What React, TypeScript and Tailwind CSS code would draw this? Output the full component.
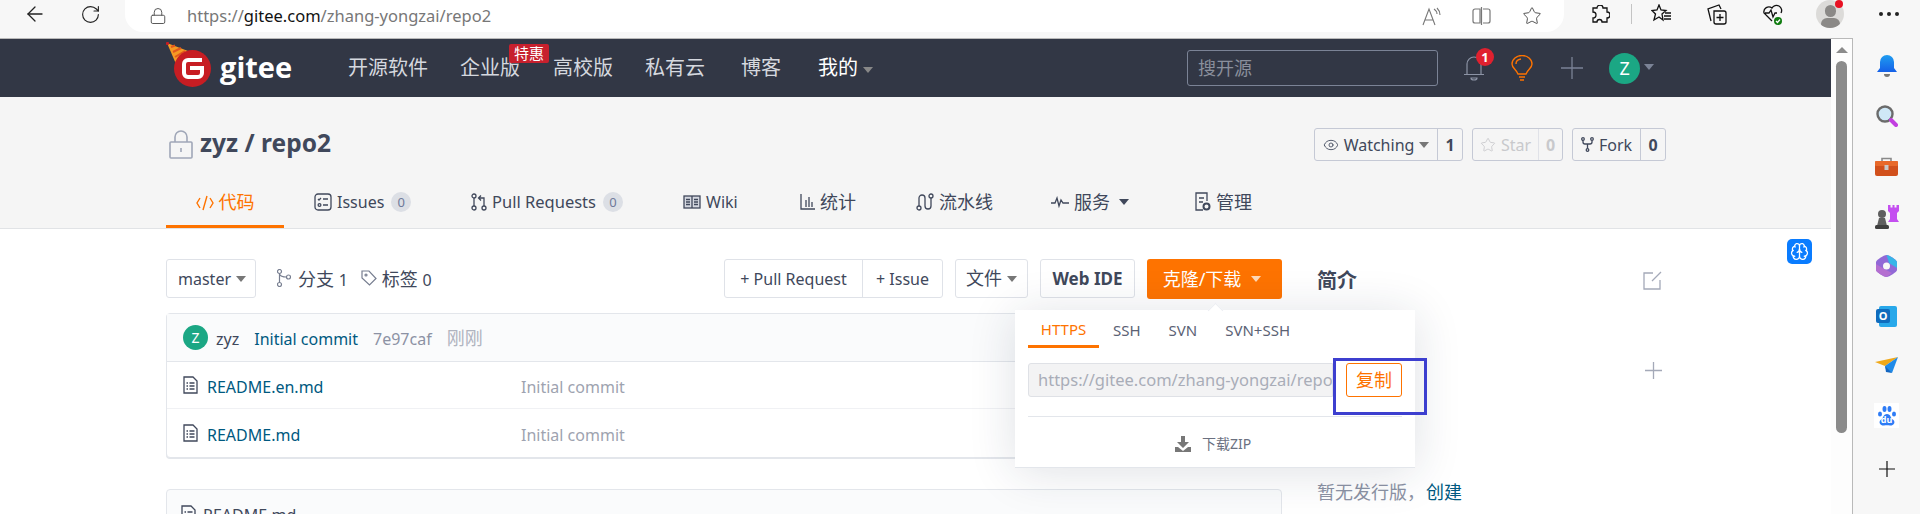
import { ArrowLeft, RotateCw, Lock, Star, Eye, Brain } from "lucide-react";

const FONT = "font-['Noto_Sans','Noto_Sans_CJK_SC',sans-serif]";

function Caret({ color = "border-t-[#888]", className = "" }: { color?: string; className?: string }) {
  return <span className={`inline-block w-0 h-0 border-x-[5px] border-t-[6px] border-x-transparent ${color} ${className}`} />;
}

function GiteeLogo() {
  return (
    <svg width="46" height="46" viewBox="0 0 46 46" className="shrink-0">
      <path d="M1 1 L22 9 L10 22 Z" fill="#f59a23" />
      <path d="M5 5 L9 3.5 M7 10 L15 6 M9 15 L19 9" stroke="#e2571e" strokeWidth="2" />
      <circle cx="1.5" cy="1.5" r="1.6" fill="#c71d23" />
      <circle cx="26.5" cy="26.5" r="18.5" fill="#c71d23" />
      <path d="M36 18 H22 a4 4 0 0 0 -4 4 v9 a4 4 0 0 0 4 4 h10 a4 4 0 0 0 4 -4 v-5 h-12" fill="none" stroke="#fff" strokeWidth="4" />
    </svg>
  );
}

function TabIcon({ name }: { name: string }) {
  const p = { fill: "none", stroke: "#40485b", strokeWidth: 1.3 };
  if (name === "code")
    return (
      <svg width="18" height="18" viewBox="0 0 18 18" fill="none" stroke="#fe7300" strokeWidth="1.4">
        <path d="M4 4 L1 9 L4 14 M14 4 L17 9 L14 14 M11 2 L7 16" />
      </svg>
    );
  if (name === "issues")
    return (
      <svg width="18" height="18" viewBox="0 0 18 18" {...p}>
        <rect x="1" y="1" width="16" height="16" rx="3" />
        <path d="M9 6 H14 M9 12 H14 M4 6 l1 1 l2 -2" />
        <circle cx="5.5" cy="12" r="1.4" />
      </svg>
    );
  if (name === "pr")
    return (
      <svg width="16" height="18" viewBox="0 0 16 18" {...p}>
        <circle cx="3" cy="3" r="2" />
        <circle cx="3" cy="15" r="2" />
        <circle cx="13" cy="15" r="2" />
        <path d="M3 5 V13 M13 13 V5 H8 M10 2.5 L7.5 5 L10 7.5" />
      </svg>
    );
  if (name === "wiki")
    return (
      <svg width="18" height="16" viewBox="0 0 18 16" {...p}>
        <rect x="1" y="2" width="16" height="12" fill="#d5d8e0" />
        <path d="M9 2 V14 M3 5.5 H7 M3 8 H7 M3 10.5 H7 M11 5.5 H15 M11 8 H15 M11 10.5 H15" />
      </svg>
    );
  if (name === "stats")
    return (
      <svg width="15" height="18" viewBox="0 0 15 18" {...p}>
        <path d="M1 1 V16 H15 M6 14 V7 M9 14 V4 M12 14 V9" />
      </svg>
    );
  if (name === "pipe")
    return (
      <svg width="18" height="18" viewBox="0 0 18 18" {...p}>
        <circle cx="3" cy="15" r="2" />
        <circle cx="15" cy="3" r="2" />
        <path d="M3 13 V5 a3 3 0 0 1 6 0 V13 a3 3 0 0 0 6 0 V5" />
      </svg>
    );
  if (name === "serv")
    return (
      <svg width="18" height="12" viewBox="0 0 18 12" {...p}>
        <path d="M0 7 H4 L6 2 L8 10 L10 4 L12 7 H18" />
      </svg>
    );
  return (
    <svg width="16" height="20" viewBox="0 0 16 20" {...p}>
      <path d="M8 18 H1 V1 H12 V9 M4 6 H9 M4 10 H8" />
      <circle cx="11.5" cy="14.5" r="3" strokeWidth="2" />
    </svg>
  );
}

function FileIcon() {
  return (
    <svg width="15" height="18" viewBox="0 0 15 18" fill="none" stroke="#40485b" strokeWidth="1.3">
      <path d="M1 1 H10 L14 5 V17 H1 Z" />
      <path d="M3.5 7 H5 M6.5 7 H11.5 M3.5 10 H5 M6.5 10 H11.5 M3.5 13 H5 M6.5 13 H11.5" />
    </svg>
  );
}

const navItems = [
  { label: "开源软件", cls: "ml-[56px]" },
  { label: "企业版", cls: "ml-[32px]" },
  { label: "高校版", cls: "ml-[33px]" },
  { label: "私有云", cls: "ml-[32px]" },
  { label: "博客", cls: "ml-[36px]" },
];

const tabs = [
  { icon: "issues", label: "Issues", badge: "0", cls: "ml-[30px] w-[157px]", text: "text-[16px]" },
  { icon: "pr", label: "Pull Requests", badge: "0", cls: "w-[212px]", text: "text-[16.5px]" },
  { icon: "wiki", label: "Wiki", cls: "w-[117px]", text: "text-[16px]" },
  { icon: "stats", label: "统计", cls: "w-[116px]", text: "text-[18px]" },
  { icon: "pipe", label: "流水线", cls: "w-[135px]", text: "text-[18px]" },
  { icon: "serv", label: "服务", caret: true, cls: "w-[144px]", text: "text-[18px]" },
  { icon: "admin", label: "管理", cls: "", text: "text-[18px]" },
];

const files = [
  { name: "README.en.md", row: "h-[47px] border-b border-[#f0f1f4]" },
  { name: "README.md", row: "h-[48px]" },
];

function Browser() {
  return (
    <div className="h-[38px] flex items-start bg-[#f7f7f7]">
      <ArrowLeft size={24} strokeWidth={1.3} className="ml-[23px] mt-[2px] text-[#222]" />
      <RotateCw size={21} strokeWidth={1.3} className="ml-[33px] mt-[4px] text-[#222]" />
      <div className="ml-[24px] w-[1439px] h-[32px] bg-white rounded-b-[18px] flex items-center pl-[24px] pr-[22px]">
        <Lock size={18} strokeWidth={1.3} className="text-[#555]" />
        <span className="ml-[20px] text-[16.5px] text-[#777]">
          https://<span className="text-[#111]">gitee.com</span>/zhang-yongzai/repo2
        </span>
        <div className="ml-auto flex items-center gap-[31px] text-[#777]">
          <svg width="19" height="19" viewBox="0 0 19 19" fill="none" stroke="currentColor" strokeWidth="1.1">
            <path d="M1 18 L7 2 L13 18 M3 13 H11 M12 2 q3 2 3 5 M15 1 q3 3 3 7" />
          </svg>
          <svg width="19" height="18" viewBox="0 0 19 18" fill="none" stroke="currentColor" strokeWidth="1.2">
            <path d="M8 2 H3 a2 2 0 0 0 -2 2 V14 a2 2 0 0 0 2 2 H8 Z M11 2 H16 a2 2 0 0 1 2 2 V14 a2 2 0 0 1 -2 2 H11 M9.5 0 V18" />
          </svg>
          <Star size={20} strokeWidth={1.2} className="text-[#555]" />
        </div>
      </div>
      <svg width="20" height="20" viewBox="0 0 20 20" fill="none" stroke="#111" strokeWidth="1.3" className="ml-[26px] mt-[5px]">
        <path d="M7 3 a3 3 0 0 1 6 0 h4 v4 a3 3 0 0 1 0 6 v4 h-5 a2.5 2.5 0 0 0 -5 0 h-4 v-4 a3 3 0 0 0 0 -6 v-4 Z" />
      </svg>
      <div className="ml-[21px] mt-[4px] w-[1px] h-[20px] bg-[#c4c4c4]" />
      <svg width="21" height="20" viewBox="0 0 21 20" fill="none" stroke="#111" strokeWidth="1.3" className="ml-[19px] mt-[4px]">
        <path d="M8 1 L10 6 L15 6.5 L11 10 L12 16 L8 13 L3 16 L4.5 10 L1 6.5 L6 6 Z M14 9 H20 M13 12 H20 M13 15 H20" />
      </svg>
      <svg width="20" height="21" viewBox="0 0 20 21" fill="none" stroke="#111" strokeWidth="1.3" className="ml-[35px] mt-[4px]">
        <path d="M4 17 L1 5 L12 1 L14 5 M7 7 H17 a2 2 0 0 1 2 2 V18 a2 2 0 0 1 -2 2 H9 a2 2 0 0 1 -2 -2 Z M13 10 V17 M9.5 13.5 H16.5" />
      </svg>
      <svg width="21" height="22" viewBox="0 0 21 22" fill="none" stroke="#111" strokeWidth="1.3" className="ml-[35px] mt-[4px]">
        <path d="M10 17 L2 9 a5 5 0 0 1 8 -5 a5 5 0 0 1 9 5 M3 9 H7 L9 6 L11 13 L13 9 H15" />
        <circle cx="16" cy="17" r="4" fill="#107c10" stroke="none" />
        <path d="M14 17 l1.5 1.5 l2.5 -3" stroke="#fff" />
      </svg>
      <div className="ml-[33px] relative w-[28px] h-[28px] rounded-full bg-[#dcdbd9] overflow-hidden">
        <div className="absolute left-[9px] top-[5px] w-[11px] h-[12px] rounded-full bg-[#8b8987]" />
        <div className="absolute left-[5px] top-[18px] w-[19px] h-[12px] rounded-full bg-[#8b8987]" />
      </div>
      <div className="absolute left-[1835px] top-0 w-[8px] h-[8px] rounded-full bg-[#e81123]" />
      <div className="ml-[35px] mt-[12px] flex gap-[4px]">
        <span className="w-[4px] h-[4px] rounded-full bg-[#222]" />
        <span className="w-[4px] h-[4px] rounded-full bg-[#222]" />
        <span className="w-[4px] h-[4px] rounded-full bg-[#222]" />
      </div>
    </div>
  );
}

function Nav() {
  return (
    <div className="h-[58px] bg-[#323745] flex items-center pl-[166px]">
      <div className="self-start mt-[3px]">
        <GiteeLogo />
      </div>
      <span className="ml-[8px] text-[29px] leading-none font-bold text-white font-['Open_Sans',sans-serif] mb-[3px]">gitee</span>
      {navItems.map((n) => (
        <span key={n.label} className={`${n.cls} text-[20px] leading-none text-[#d5d8df]`}>
          {n.label}
        </span>
      ))}
      <span className="ml-[37px] text-[20px] leading-none text-white">我的</span>
      <Caret className="ml-[5px] mt-[3px]" />
      <div className="ml-[314px] w-[251px] h-[36px] border border-[#7b8396] rounded-[3px] flex items-center pl-[10px] text-[18px] text-[#8a8f9c]">
        搜开源
      </div>
      <svg width="20" height="26" viewBox="0 0 20 26" fill="none" stroke="#8c93a5" strokeWidth="1.2" className="ml-[26px]">
        <path d="M3 19 V9 a7 7 0 0 1 14 0 V19 M0 19.5 H20 M7 23 a3 2 0 0 0 6 0 Z" />
      </svg>
      <svg width="22" height="26" viewBox="0 0 22 26" fill="none" stroke="#fe7300" strokeWidth="1.4" className="ml-[27px]">
        <path d="M7 19 C5 14 1 13 1 9 a10 8.5 0 0 1 20 0 C21 13 17 14 15 19 Z M8 22 H14 M9 25 H13 M5 9 a6 5 0 0 1 5 -5" />
      </svg>
      <svg width="22" height="22" viewBox="0 0 22 22" stroke="#7b8396" strokeWidth="1.3" className="ml-[28px]">
        <path d="M11 0 V22 M0 11 H22" />
      </svg>
      <div className="ml-[26px] w-[31px] h-[31px] rounded-full bg-[#1ba784] flex items-center justify-center text-white text-[18px]">Z</div>
      <Caret color="border-t-[#7b8396]" className="ml-[4px] -mt-[2px]" />
      <span className="absolute left-[1476px] top-[9px] w-[18px] h-[18px] rounded-full bg-[#e0212f] text-white text-[13px] leading-[18px] text-center font-bold">1</span>
      <span className="absolute left-[509px] top-[5px] w-[40px] h-[19px] rounded-[2px] bg-[#c7202d] text-white text-[15px] leading-[19px] text-center">特惠</span>
    </div>
  );
}

function Counter({ label, count, icon, muted, caret, w, cw }: { label: string; count: string; icon: React.ReactNode; muted?: boolean; caret?: boolean; w: string; cw: string }) {
  return (
    <div className={`h-[33px] flex items-center border border-[#c5c9d5] rounded-[3px] text-[16px] ${muted ? "text-[#c8c9cc]" : "text-[#40485b]"}`}>
      <div className={`${w} h-full flex items-center justify-center gap-[5px] border-r ${muted ? "border-[#e0e2e8]" : "border-[#c5c9d5]"}`}>
        {icon}
        <span>{label}</span>
        {caret && <Caret color="border-t-[#777]" />}
      </div>
      <span className={`${cw} text-center font-bold`}>{count}</span>
    </div>
  );
}

function SubHeader() {
  return (
    <div className="h-[132px] bg-[#f5f5f5] border-b border-[#e1e3e6] flex flex-col pl-[166px]">
      <div className="mt-[31px] h-[33px] flex items-center">
        <svg width="24" height="29" viewBox="0 0 24 29" fill="none" stroke="#a0a7b8" strokeWidth="1.6" className="ml-[3px]">
          <rect x="1" y="12" width="22" height="16" rx="1" />
          <path d="M6 12 V7 a6 6 0 0 1 12 0 V12 M12 18 V22" />
        </svg>
        <span className="ml-[7px] text-[24.5px] font-bold text-[#40485b] -mt-[2px]">zyz / repo2</span>
        <div className="ml-auto mr-[165px] flex items-center gap-[9px]">
          <Counter w="w-[123px]" cw="w-[24px]" label="Watching" count="1" caret icon={<Eye size={16} strokeWidth={1.3} />} />
          <Counter w="w-[66px]" cw="w-[23px]" label="Star" count="0" muted icon={<Star size={16} strokeWidth={1.3} />} />
          <Counter w="w-[68px]" cw="w-[24px]" label="Fork" count="0" icon={
            <svg width="13" height="15" viewBox="0 0 13 15" fill="none" stroke="#40485b" strokeWidth="1.3">
              <circle cx="2" cy="2" r="1.3" /><circle cx="11" cy="2" r="1.3" /><circle cx="6.5" cy="13" r="1.3" />
              <path d="M2 3.5 V5 a2 2 0 0 0 2 2 H9 a2 2 0 0 0 2 -2 V3.5 M6.5 7 V11.5" />
            </svg>
          } />
        </div>
      </div>
      <div className="mt-auto h-[53px] flex items-center text-[#40485b]">
        <div className="w-[118px] h-full border-b-[3px] border-[#fe7300] flex items-center justify-center gap-[5px] pt-[5px] text-[#fe7300] text-[18px]">
          <TabIcon name="code" />
          代码
        </div>
        {tabs.map((t) => (
          <div key={t.label} className={`${t.cls} flex items-center gap-[5px] pt-[1px]`}>
            <TabIcon name={t.icon} />
            <span className={t.text}>{t.label}</span>
            {t.badge && (
              <span className="ml-[2px] w-[20px] h-[20px] rounded-full bg-[#dcdfe5] text-[#6f7a9a] text-[13px] leading-[20px] text-center">{t.badge}</span>
            )}
            {t.caret && <Caret color="border-t-[#40485b]" className="ml-[4px]" />}
          </div>
        ))}
      </div>
    </div>
  );
}

function Toolbar() {
  const btn = "h-[39px] bg-white border border-[#dfe2e8] rounded-[3px] flex items-center text-[#40485b] text-[16px]";
  return (
    <div className="mt-[30px] h-[40px] flex items-start">
      <div className={`${btn} w-[90px] pl-[11px] gap-[5px]`}>
        master <Caret color="border-t-[#777]" />
      </div>
      <svg width="14" height="18" viewBox="0 0 14 18" fill="none" stroke="#777e90" strokeWidth="1.2" className="ml-[21px] mt-[10px]">
        <circle cx="2.5" cy="2.5" r="2" /><circle cx="2.5" cy="15.5" r="2" /><circle cx="11.5" cy="8" r="2" />
        <path d="M2.5 4.5 V13.5 M2.5 5 q1 3 7 3" />
      </svg>
      <span className="ml-[7px] mt-[8px] text-[18px] leading-[24px] text-[#40485b]">
        分支 <span className="text-[16px]">1</span>
      </span>
      <svg width="16" height="16" viewBox="0 0 16 16" fill="none" stroke="#777e90" strokeWidth="1.2" className="ml-[13px] mt-[11px]">
        <path d="M1 1 H8 L15 8.5 L8.5 15 L1 8 Z" /><circle cx="5" cy="5" r="1" />
      </svg>
      <span className="ml-[5px] mt-[8px] text-[18px] leading-[24px] text-[#40485b]">
        标签 <span className="text-[16px]">0</span>
      </span>
      <div className="ml-auto flex items-start gap-[12px]">
        <div className={`${btn} w-[219px]`}>
          <span className="w-[138px] h-full flex items-center justify-center border-r border-[#dfe2e8] pt-[1px]">+ Pull Request</span>
          <span className="flex-1 text-center pt-[1px]">+ Issue</span>
        </div>
        <div className={`${btn} w-[73px] justify-center gap-[5px] text-[18px]`}>
          文件 <Caret color="border-t-[#777]" />
        </div>
        <div className={`${btn} w-[95px] justify-center font-bold text-[17px]`}>Web IDE</div>
        <div className="w-[135px] h-[40px] pr-[5px] bg-[#fe7300] rounded-[3px] flex items-center justify-center gap-[10px] text-white text-[18px]">
          克隆/下载 <Caret color="border-t-[#ffd9b8]" />
        </div>
      </div>
    </div>
  );
}

function FileBox() {
  return (
    <div className="mt-[14px] border border-[#e3e6eb] rounded-[4px] bg-white shadow-[0_1px_0_#e3e6eb]">
      <div className="h-[48px] bg-[#fafbfc] border-b border-[#e3e6eb] flex items-center pl-[16px] text-[16px]">
        <span className="w-[25px] h-[25px] rounded-full bg-[#1ba784] text-white text-[14px] leading-[25px] text-center">Z</span>
        <span className="ml-[8px] pt-[2px] text-[#40485b]">zyz</span>
        <span className="ml-[15px] pt-[2px] text-[#005980]">Initial commit</span>
        <span className="ml-[15px] pt-[2px] text-[#8c92a4]">7e97caf</span>
        <span className="ml-[15px] pt-[2px] text-[18px] text-[#b0b4bf]">刚刚</span>
      </div>
      {files.map((f) => (
        <div key={f.name} className={`${f.row} flex items-center pl-[16px] text-[16px]`}>
          <FileIcon />
          <span className="ml-[9px] pt-[4px] w-[314px] text-[#005980]">{f.name}</span>
          <span className="pt-[4px] text-[#9ea3b0]">Initial commit</span>
        </div>
      ))}
    </div>
  );
}

function ClonePopup() {
  return (
    <div className="absolute left-[1015px] top-[271px] w-[400px] h-[158px] bg-white border-b border-[#e3e6eb] shadow-[0_4px_44px_rgba(30,40,70,0.14)] pl-[13px]">
      <div className="absolute left-[195px] -top-[5px] w-[11px] h-[11px] rotate-45 bg-white border-l border-t border-[#eceef2]" />
      <div className="h-[38px] flex items-center text-[15px] text-[#5b6274]">
        <div className="w-[71px] h-full border-b-[3px] border-[#fe7300] text-[#fe7300] flex items-center justify-center pt-[3px]">HTTPS</div>
        <span className="ml-[14px] pt-[2px]">SSH</span>
        <span className="ml-[28px] pt-[2px]">SVN</span>
        <span className="ml-[28px] pt-[2px]">SVN+SSH</span>
      </div>
      <div className="mt-[15px] flex items-start">
        <div className="w-[305px] h-[34px] bg-[#f3f3f4] border border-[#dfe1e6] rounded-l-[3px] pl-[9px] text-[16.5px] leading-[32px] text-[#a9adb8] overflow-hidden whitespace-nowrap">
          https://gitee.com/zhang-yongzai/repo2
        </div>
        <div className="ml-[13px] w-[56px] h-[34px] border border-[#fe7300] rounded-[3px] text-[#fe7300] text-[18px] flex items-center justify-center">复制</div>
      </div>
      <div className="mt-[19px] w-[374px] border-t border-[#e3e6eb]" />
      <div className="mt-[16px] ml-[147px] flex items-center text-[14px] text-[#6b7080]">
        <svg width="16" height="16" viewBox="0 0 16 16" fill="#777">
          <path d="M6 0 H10 V6 H14 L8 12 L2 6 H6 Z M0 11 H3 L8 15 L13 11 H16 V16 H0 Z" />
        </svg>
        <span className="ml-[11px]">下载ZIP</span>
      </div>
    </div>
  );
}

function Sidebar() {
  return (
    <div className="flex-1 bg-[#f7f7f7] flex flex-col items-center">
      <svg width="22" height="22" viewBox="0 0 22 22" className="mt-[17px]">
        <defs>
          <linearGradient id="bell" x1="0" y1="0" x2="0" y2="1">
            <stop offset="0" stopColor="#1f9df0" /><stop offset="1" stopColor="#1560e8" />
          </linearGradient>
        </defs>
        <path d="M11 0 a7 7 0 0 1 7 7 v6 l3 4 H1 l3 -4 V7 a7 7 0 0 1 7 -7 Z" fill="url(#bell)" />
        <path d="M8 19 h6 a3 3 0 0 1 -6 0 Z" fill="#777" />
      </svg>
      <svg width="22" height="22" viewBox="0 0 22 22" className="mt-[28px]">
        <circle cx="9" cy="9" r="7.5" fill="#cfe8f7" stroke="#6b6b6b" strokeWidth="2.4" />
        <path d="M15 15 L20 20" stroke="#c23fe0" strokeWidth="4" strokeLinecap="round" />
      </svg>
      <svg width="23" height="19" viewBox="0 0 23 19" className="mt-[30px]">
        <path d="M7 5 V1.5 H16 V5" fill="none" stroke="#8a8a8a" strokeWidth="1.6" />
        <rect x="0" y="4" width="23" height="15" rx="2" fill="#d1501c" />
        <rect x="0" y="4" width="23" height="5" rx="1" fill="#e8692a" />
        <rect x="9.5" y="8" width="4" height="5" fill="#c8c8c8" />
      </svg>
      <svg width="24" height="24" viewBox="0 0 24 24" className="mt-[29px]">
        <path d="M13 0 h2.5 v2.5 h2 v-2.5 h2 v2.5 h2 v-2.5 h2.5 v6 l-2 2 v6 l2 3 h-11 l2 -3 v-6 l-2 -2 Z" fill="#c44ff0" />
        <circle cx="7" cy="9" r="4" fill="#5f5f5f" />
        <path d="M4 13 H10 L12 21 H2 Z" fill="#5f5f5f" />
        <rect x="0" y="20" width="14" height="4" rx="1.5" fill="#3f3f3f" />
      </svg>
      <svg width="21" height="22" viewBox="0 0 21 22" className="mt-[26px]">
        <path d="M10.5 0 C13 0 21 5 21 7 V15 C21 17 13 22 10.5 22 C8 22 0 17 0 15 V7 C0 5 8 0 10.5 0 Z" fill="#9168d6" />
        <path d="M10.5 0 C13 0 21 5 21 7 V13 L13 8 Z" fill="#38b4e8" />
        <path d="M0 9 L8 14 L16 18 L10.5 22 C8 22 0 17 0 15 Z" fill="#b46fd0" />
        <circle cx="10.5" cy="11" r="3.5" fill="#f7f7f7" />
      </svg>
      <div className="mt-[29px] relative w-[21px] h-[21px]">
        <div className="absolute left-[3px] top-0 w-[18px] h-[21px] bg-[#28a8ea] rounded-[2px]" />
        <div className="absolute left-0 top-[3px] w-[14px] h-[14px] bg-[#0f6cbd] rounded-[2px] text-white text-[11px] leading-[14px] text-center font-bold">O</div>
      </div>
      <svg width="23" height="17" viewBox="0 0 23 17" className="mt-[30px]">
        <path d="M0 5 L23 0 L10 9 Z" fill="#f0a818" />
        <path d="M23 0 L17 16 L11 12 L10 9 Z" fill="#1f8ae8" />
        <path d="M10 9 L11 15 L17 16 Z" fill="#1466c0" />
      </svg>
      <div className="mt-[29px] w-[25px] h-[25px] bg-white flex items-center justify-center relative">
        <svg width="20" height="20" viewBox="0 0 20 20" fill="#2e7cf6">
          <ellipse cx="3" cy="8" rx="2" ry="2.6" /><ellipse cx="7.5" cy="3" rx="2" ry="3" />
          <ellipse cx="12.5" cy="3" rx="2" ry="3" /><ellipse cx="17" cy="8" rx="2" ry="2.6" />
          <path d="M10 8 C6 8 7 12 3.5 14 C1 17 4 20 7 19.5 C9 19 11 19 13 19.5 C16 20 19 17 16.5 14 C13 12 14 8 10 8 Z" />
        </svg>
        <span className="absolute left-0 right-0 top-[12px] text-center text-white text-[9px] leading-[10px] font-bold">du</span>
      </div>
      <svg width="16" height="16" viewBox="0 0 16 16" stroke="#111" strokeWidth="1.2" className="mt-[33px]">
        <path d="M8 0 V16 M0 8 H16" />
      </svg>
    </div>
  );
}

export default function App() {
  return (
    <div className={`relative w-[1920px] h-[514px] overflow-hidden flex flex-col bg-white ${FONT}`}>
      <Browser />
      <div className="h-[476px] flex">
        <div className="w-[1853px] border-t border-r border-[#b9b9b9] flex">
          <div className="relative w-[1831px] overflow-hidden">
            <Nav />
            <SubHeader />
            <div className="flex pl-[166px]">
              <div className="w-[1116px]">
                <Toolbar />
                <FileBox />
                <div className="mt-[31px] h-[60px] border border-[#e3e6eb] rounded-[4px] bg-[#fafbfc] pl-[14px] pt-[15px] flex items-start gap-[7px] text-[16px] text-[#40485b]">
                  <FileIcon />
                  <span className="leading-[20px]">README.md</span>
                </div>
              </div>
              <div className="ml-[35px] w-[345px]">
                <div className="mt-[40px] h-[24px] flex items-center justify-between">
                  <span className="text-[20px] font-bold text-[#40485b]">简介</span>
                  <svg width="19" height="19" viewBox="0 0 19 19" fill="none" stroke="#a4a9b8" strokeWidth="1.3" className="-mt-[2px]">
                    <path d="M10 2 H1 V18 H17 V9 M9 10 L18 1" />
                  </svg>
                </div>
                <div className="mt-[69px] flex justify-end">
                  <svg width="17" height="17" viewBox="0 0 17 17" stroke="#a4a9b8" strokeWidth="1.3">
                    <path d="M8.5 0 V17 M0 8.5 H17" />
                  </svg>
                </div>
                <div className="mt-[101px] text-[18px] leading-[24px] text-[#8c92a4]">
                  暂无发行版，<span className="ml-[1px] text-[#005980]">创建</span>
                </div>
              </div>
            </div>
            <ClonePopup />
            <div className="absolute left-[1333px] top-[319px] w-[94px] h-[57px] border-[3px] border-[#3d3fcf]" />
            <div className="absolute left-[1787px] top-[200px] w-[25px] h-[25px] rounded-[5px] bg-[#0a7cff] flex items-center justify-center">
              <Brain size={19} strokeWidth={1.6} className="text-white" />
            </div>
          </div>
          <div className="flex-1 bg-[#fdfdfd] flex flex-col items-center pt-[8px]">
            <span className="w-0 h-0 border-x-[6px] border-b-[6px] border-x-transparent border-b-[#8b8b8b]" />
            <div className="mt-[8px] w-[11px] h-[372px] rounded-full bg-[#8b8b8b]" />
          </div>
        </div>
        <Sidebar />
      </div>
    </div>
  );
}
